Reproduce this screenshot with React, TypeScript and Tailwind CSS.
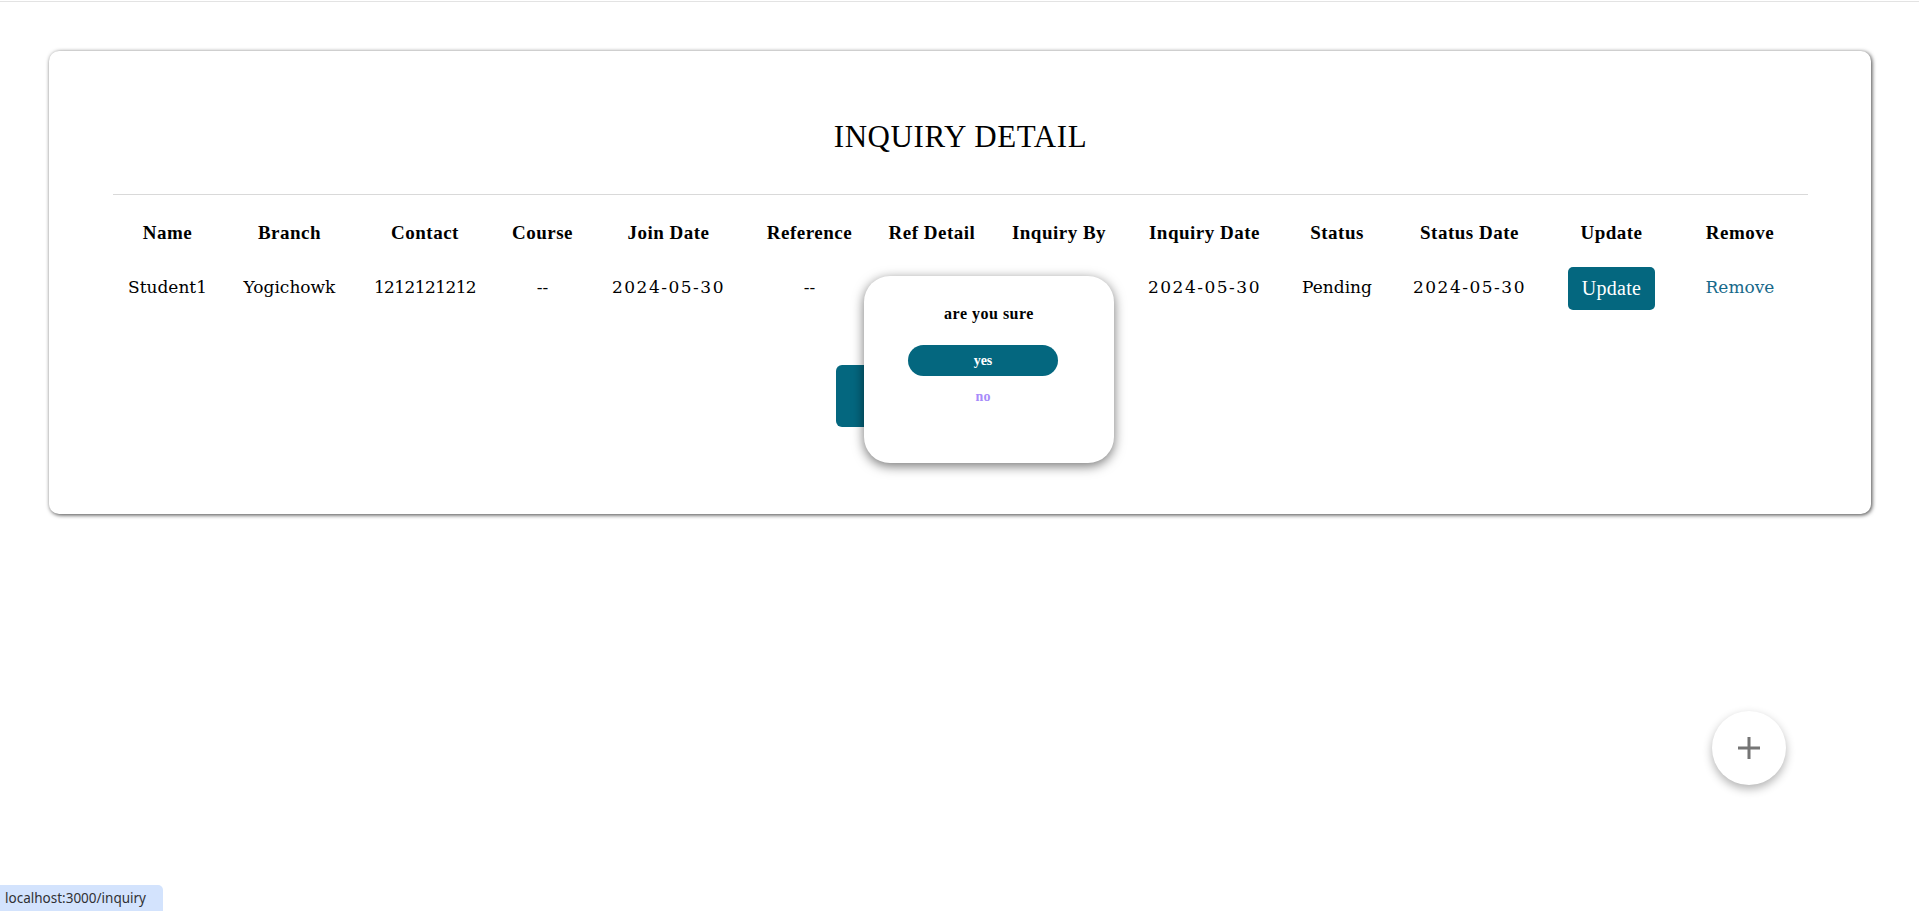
import React from "react";

const headers = [
  "Name",
  "Branch",
  "Contact",
  "Course",
  "Join Date",
  "Reference",
  "Ref Detail",
  "Inquiry By",
  "Inquiry Date",
  "Status",
  "Status Date",
  "Update",
  "Remove",
];

const row: { t: string; c: string }[] = [
  { t: "Student1", c: "" },
  { t: "Yogichowk", c: "" },
  { t: "1212121212", c: "tracking-[-0.6px]" },
  { t: "--", c: "" },
  { t: "2024-05-30", c: "tracking-[1.5px]" },
  { t: "--", c: "" },
  { t: "", c: "" },
  { t: "", c: "" },
  { t: "2024-05-30", c: "tracking-[1.5px]" },
  { t: "Pending", c: "" },
  { t: "2024-05-30", c: "tracking-[1.5px]" },
];

const dataFont = { fontFamily: '"DejaVu Serif", "Liberation Serif", serif' };

export default function App() {
  return (
    <div
      className="relative w-full h-[911px] overflow-hidden bg-white text-black"
      style={{ fontFamily: '"Liberation Serif", serif' }}
    >
      <div className="h-[2px] border-b border-[#e3e3e3]" />
      <div className="ml-[49px] mt-[49px] w-[1822px] rounded-[10px] bg-white shadow-[1px_1px_4px_rgba(0,0,0,0.75)] pl-[64px] pr-[63px] pt-[68px] pb-[87px]">
        <h1 className="text-center text-[31px] leading-[36px] tracking-[0.6px] font-normal">
          INQUIRY DETAIL
        </h1>
        <div className="mt-[39px] h-px bg-[#d9d9d9]" />
        <div className="mt-[18px] grid grid-cols-[109px_135px_136px_99px_153px_129px_116px_138px_153px_112px_153px_131px_126px]">
          {headers.map((h) => (
            <div
              key={h}
              className="h-[40px] flex items-center justify-center text-[19px] font-bold tracking-[0.5px] whitespace-nowrap"
            >
              {h}
            </div>
          ))}
        </div>
        <div className="mt-[13px] grid grid-cols-[109px_135px_136px_99px_153px_129px_116px_138px_153px_112px_153px_131px_126px]">
          {row.map((c, i) => (
            <div
              key={i}
              className={`h-[44px] flex items-center justify-center text-[17px] whitespace-nowrap ${c.c}`}
              style={dataFont}
            >
              {c.t}
            </div>
          ))}
          <div className="h-[44px] flex items-center justify-center">
            <button className="h-[43px] w-[87px] rounded-[5px] bg-[#04677f] text-white text-[20px] tracking-[0.3px]">
              Update
            </button>
          </div>
          <div
            className="h-[44px] flex items-center justify-center text-[17px] text-[#17698a]"
            style={dataFont}
          >
            Remove
          </div>
        </div>
        <div className="mt-[55px] flex justify-center">
          <button
            aria-label="Add Inquiry"
            className="h-[62px] w-[250px] rounded-[6px] bg-[#04677f]"
          />
        </div>
      </div>

      {/* confirm popup */}
      <div className="absolute left-[864px] top-[276px] w-[250px] h-[187px] rounded-[26px] bg-white shadow-[0_3px_12px_rgba(0,0,0,0.55)] flex flex-col">
        <div className="mt-[28px] text-center text-[16px] font-bold leading-[20px] tracking-[0.5px]">
          are you sure
        </div>
        <div className="ml-[44px] w-[150px] flex flex-col items-center">
          <button className="mt-[21px] h-[31px] w-[150px] rounded-full bg-[#04677f] text-white text-[14px] font-bold">
            yes
          </button>
          <div className="mt-[12px] text-[14px] font-bold text-[#a78bfa] leading-[18px]">no</div>
        </div>
      </div>

      {/* FAB */}
      <button className="absolute left-[1712px] top-[711px] w-[74px] h-[74px] rounded-full bg-white shadow-[0_4px_10px_rgba(0,0,0,0.3)] flex items-center justify-center">
        <svg width="28" height="28" viewBox="0 0 28 28">
          <path d="M14 3v22M3 14h22" stroke="#757575" strokeWidth="3" />
        </svg>
      </button>

      {/* status bar */}
      <div
        className="absolute left-0 bottom-0 h-[26px] w-[163px] bg-[#d3e3fd] rounded-tr-[5px] flex items-center pl-[5px] text-[13.5px] text-[#303134]"
        style={{ fontFamily: '"Noto Sans", "Open Sans", sans-serif' }}
      >
        localhost:3000/inquiry
      </div>
    </div>
  );
}
